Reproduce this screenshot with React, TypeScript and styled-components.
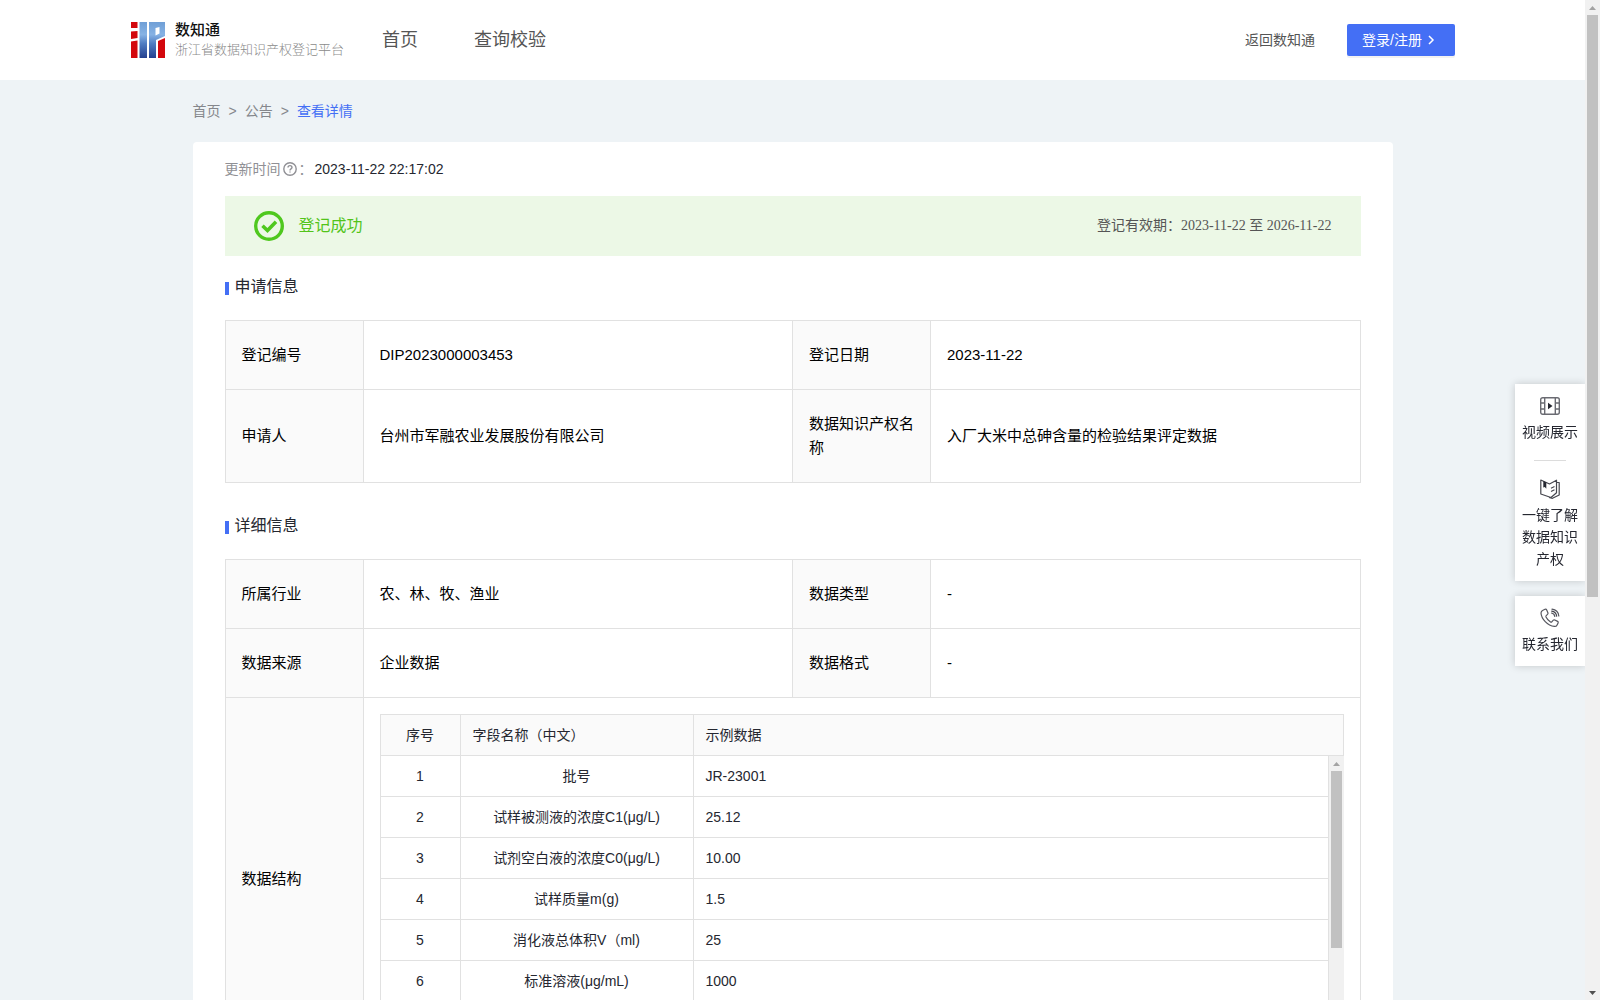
import React from "react";
import styled, { createGlobalStyle } from "styled-components";

const SANS = '"Liberation Sans", Arial, "Noto Sans CJK SC", sans-serif';
const SERIF = '"Liberation Serif", "Times New Roman", "Noto Sans CJK SC", serif';
const BLUE = "#446ff5";
const LINE = "#e1e1e1";

const GlobalStyle = createGlobalStyle`
  *, *::before, *::after { box-sizing: border-box; }
  body { margin: 0; font-family: ${SANS}; font-size: 14px; color: #252730; }
  a { color: inherit; text-decoration: none; }
  table { border-spacing: 0; }
`;

const Shell = styled.div`
  display: flex;
  height: 100vh;
  background: #eef3f6;
`;

const Page = styled.div`
  flex: 1;
  min-width: 0;
  overflow-y: auto;
  scrollbar-width: none;
`;

const Header = styled.header`
  display: flex;
  align-items: center;
  height: 80px;
  padding: 0 130px 0 131px;
  background: #fff;
`;

const Brand = styled.a`
  display: flex;
  align-items: center;
  gap: 10px;
`;

const BrandText = styled.span`
  display: flex;
  flex-direction: column;
`;

const BrandName = styled.strong`
  font-size: 15px;
  line-height: 20px;
  font-weight: 500;
  color: #111;
`;

const BrandSub = styled.span`
  font-size: 13px;
  line-height: 20px;
  font-weight: 300;
  color: #8a8a8a;
`;

const Nav = styled.nav`
  display: flex;
  gap: 56px;
  margin-left: 38px;
  font-size: 18px;
  line-height: 28px;
  color: #555;
`;

const HeaderActions = styled.div`
  display: flex;
  align-items: center;
  gap: 32px;
  margin-left: auto;
  line-height: 20px;
  color: #555;
`;

const LoginButton = styled.button`
  display: flex;
  align-items: center;
  gap: 4px;
  width: 108px;
  height: 32px;
  padding: 0 15px;
  border: 0;
  border-radius: 2px;
  background: ${BLUE};
  box-shadow: 0 2px 0 rgba(0, 0, 0, 0.05);
  color: #fff;
  font: 14px/20px ${SANS};
  white-space: nowrap;
`;

const Content = styled.main`
  width: 1200px;
  max-width: 100%;
  margin: 0 auto;
`;

const Crumbs = styled.nav`
  display: flex;
  gap: 8px;
  padding: 20px 0;
  line-height: 22px;
  color: #85878c;
`;

const CrumbCurrent = styled.span`
  color: ${BLUE};
`;

const Card = styled.section`
  padding: 16px 32px 32px;
  border-radius: 4px;
  background: #fff;
`;

const Updated = styled.div`
  display: flex;
  align-items: center;
  line-height: 22px;
  color: #909095;

  svg { margin: 0 2px; }
  time { margin-left: 2px; color: #252730; }
`;

const Banner = styled.div`
  display: flex;
  align-items: center;
  gap: 15px;
  height: 60px;
  margin-top: 16px;
  padding: 0 29px;
  background: #ecf8e6;
`;

const BannerStatus = styled.strong`
  font-size: 16px;
  line-height: 24px;
  font-weight: 400;
  color: #52c41a;
`;

const BannerPeriod = styled.span`
  margin-left: auto;
  font-family: ${SERIF};
  line-height: 22px;
  color: #555;
`;

const SectionTitle = styled.h2<{ $gap: number }>`
  display: flex;
  align-items: center;
  gap: 6px;
  margin: ${(p) => p.$gap}px 0 20px;
  font-size: 16px;
  line-height: 26px;
  font-weight: 400;

  &::before {
    content: "";
    width: 4px;
    height: 13px;
    margin-top: 2px;
    background: ${BLUE};
  }
`;

const InfoTable = styled.table`
  width: 100%;
  table-layout: fixed;
  border-top: 1px solid ${LINE};
  border-left: 1px solid ${LINE};
  font-size: 15px;
  line-height: 24px;
  color: #000;
`;

const LabelCol = styled.col`
  width: 138px;
`;

const InfoLabel = styled.th`
  padding: 22px 16px;
  border-right: 1px solid ${LINE};
  border-bottom: 1px solid ${LINE};
  background: #fafafa;
  font-weight: 400;
  text-align: left;
`;

const InfoValue = styled.td<{ $nested?: boolean }>`
  padding: ${(p) => (p.$nested ? "16px" : "22px 16px")};
  border-right: 1px solid ${LINE};
  border-bottom: 1px solid ${LINE};
`;

const FieldTable = styled.table`
  flex: 1;
  width: 100%;
  table-layout: fixed;
  border-left: 1px solid ${LINE};
  font-size: 14px;
  line-height: 20px;
  color: #252730;

  thead th { border-top: 1px solid ${LINE}; }
`;

const FieldCol = styled.col<{ $width: number }>`
  width: ${(p) => p.$width}px;
`;

const FieldHead = styled.th<{ $center?: boolean }>`
  padding: 10px 12px;
  border-right: 1px solid ${LINE};
  border-bottom: 1px solid ${LINE};
  background: #fafafa;
  font-weight: 400;
  text-align: ${(p) => (p.$center ? "center" : "left")};
`;

const FieldCell = styled.td<{ $center?: boolean }>`
  padding: 10px 12px;
  border-right: 1px solid ${LINE};
  border-bottom: 1px solid ${LINE};
  text-align: ${(p) => (p.$center ? "center" : "left")};
`;

const FieldBody = styled.div`
  display: flex;
  align-items: flex-start;
  height: 287px;
`;

const Rail = styled.div`
  display: flex;
  flex-direction: column;
  align-items: center;
  flex: none;
  align-self: stretch;
  width: 15px;
  background: #f1f1f1;
`;

const Track = styled.div`
  flex: 1;
  width: 11px;
`;

const Thumb = styled.div<{ $share: number }>`
  height: ${(p) => p.$share}%;
  background: #c1c1c1;
`;

const Floating = styled.aside`
  position: fixed;
  top: 384px;
  right: 15px;
  display: flex;
  flex-direction: column;
  gap: 15px;
  width: 70px;
`;

const FloatGroup = styled.div`
  display: flex;
  flex-direction: column;
  align-items: center;
  background: #fff;
  box-shadow: 0 0 8px rgba(0, 0, 0, 0.18);
  clip-path: inset(-10px 0 -10px -10px);
`;

const FloatLink = styled.a`
  display: flex;
  flex-direction: column;
  align-items: center;
  gap: 5px;
  width: 100%;
  padding: 12px 7px 11px;
  line-height: 22px;
  text-align: center;
`;

const FloatDivider = styled.hr`
  width: 32px;
  height: 1px;
  margin: 6px 0;
  border: 0;
  background: #dcdcdc;
`;

const Logo = () => (
  <svg width="34" height="36" viewBox="0 0 34 36" aria-hidden="true">
    <defs>
      <linearGradient id="ip-blue" x1="0" y1="0" x2="0" y2="36" gradientUnits="userSpaceOnUse">
        <stop offset="0" stopColor="#6f9fd6" />
        <stop offset="0.35" stopColor="#86b2e4" />
        <stop offset="0.6" stopColor="#4f7cc2" />
        <stop offset="1" stopColor="#24408f" />
      </linearGradient>
    </defs>
    <g fill="#d3070d">
      <path d="M0 0h6.500v6H0z" />
      <path d="M0 9.500 6.500 9v7L0 17z" />
      <path d="M0 19.500 6.500 18.500V36H0z" />
      <path d="M27 19 34 16v20h-7z" />
    </g>
    <g fill="url(#ip-blue)">
      <path d="M8.500 0h7.500v36H8.500z" />
      <path fillRule="evenodd" d="M18 0h16v14l-9 4V36h-7zM24.500 6v7.500l4-2V5z" />
    </g>
  </svg>
);

const QuestionIcon = () => (
  <svg width="14" height="14" viewBox="0 0 14 14" fill="none" stroke="#909095" strokeWidth="1.400" aria-hidden="true">
    <circle cx="7" cy="7" r="6.200" />
    <path d="M5 5.600c0-2.600 4-2.600 4 0C9 7 7 6.900 7 8.400M7 9.400v1.200" />
  </svg>
);

const SuccessIcon = () => (
  <svg width="30" height="30" viewBox="0 0 30 30" fill="none" stroke="#4fc81e" aria-hidden="true">
    <circle cx="15" cy="15" r="13.300" strokeWidth="3.400" />
    <path d="m8.500 14.800 5 4.700 8.500-8.700" strokeWidth="3.600" />
  </svg>
);

const ChevronIcon = () => (
  <svg width="10" height="12" viewBox="0 0 10 12" fill="none" stroke="#fff" strokeWidth="1.500" aria-hidden="true">
    <path d="m3 2 4 4-4 4" />
  </svg>
);

const VideoIcon = () => (
  <svg width="20" height="20" viewBox="0 0 20 20" fill="none" stroke="#6a6b72" strokeWidth="1.400" aria-hidden="true">
    <rect x=".7" y="1.700" width="18.600" height="16.600" rx="2" />
    <path d="M4.700 2v16M15.300 2v16M1 7h3.700M1 13h3.700M15.300 7H19M15.300 13H19" />
    <path d="M8 6.800 12.500 10 8 13.200z" fill="#252730" stroke="none" />
  </svg>
);

const BookIcon = () => (
  <svg width="20" height="20" viewBox="0 0 20 20" fill="none" stroke="#45464e" strokeWidth="1.200" strokeLinejoin="round" aria-hidden="true">
    <path d="M.8 1 9.500 5l7-3.800v12.600L11 18.500.8 15z" />
    <path d="M16.500 3.500 19.200 3.500v12.500L12.500 19.300 9 18.500" />
    <path d="m11 9.200 3.500-1.700M11 12.500l3.500-1.700" />
    <path d="m3.300 2 3 1.400v6.400L4.800 8 3.300 8.400z" fill="#252730" stroke="none" />
  </svg>
);

const PhoneIcon = () => (
  <svg width="20" height="20" viewBox="0 0 20 20" fill="none" stroke="#55565e" strokeWidth="1.200" strokeLinecap="round" strokeLinejoin="round" aria-hidden="true">
    <path d="M3 2.200 5 1.300c.8-.3 1.400 0 1.700.7l1.200 2.800c.3.700.1 1.200-.4 1.600L6.200 7.600c-.4.400-.4.800-.2 1.300 1 2 2.600 3.800 4.500 5 .5.300 1 .3 1.300-.1l1.500-1.600c.4-.4.900-.5 1.500-.2l2.800 1.400c.6.300.8.900.5 1.500l-1 2c-.5 1-1.400 1.600-2.700 1.500C7.500 17.800 1.300 10.800 1 5c0-1.300.9-2.300 2-2.800z" />
    <path d="M11.500 5c1.900.3 3 1.500 3.300 3.300M12 1.200c3.600.4 6.400 3.200 6.800 6.800" />
    <path d="M11.700 3.100c2.900.4 4.600 2.200 5 5.100" stroke="#45464e" />
  </svg>
);

const ArrowUp = () => (
  <svg width="15" height="15" viewBox="0 0 15 15" aria-hidden="true">
    <path d="M4 10 7.500 6 11 10z" fill="#a3a3a3" />
  </svg>
);

const ArrowDown = () => (
  <svg width="15" height="15" viewBox="0 0 15 15" aria-hidden="true">
    <path d="M4 6 7.500 10 11 6z" fill="#505050" />
  </svg>
);

type Pair = [string, string];

const application: Pair[][] = [
  [["登记编号", "DIP2023000003453"], ["登记日期", "2023-11-22"]],
  [["申请人", "台州市军融农业发展股份有限公司"], ["数据知识产权名称", "入厂大米中总砷含量的检验结果评定数据"]],
];

const details: Pair[][] = [
  [["所属行业", "农、林、牧、渔业"], ["数据类型", "-"]],
  [["数据来源", "企业数据"], ["数据格式", "-"]],
];

const fields: Pair[] = [
  ["批号", "JR-23001"],
  ["试样被测液的浓度C1(μg/L)", "25.12"],
  ["试剂空白液的浓度C0(μg/L)", "10.00"],
  ["试样质量m(g)", "1.5"],
  ["消化液总体积V（ml)", "25"],
  ["标准溶液(μg/mL)", "1000"],
];

const InfoCols = () => (
  <colgroup>
    <LabelCol />
    <col />
    <LabelCol />
    <col />
  </colgroup>
);

const InfoRows = ({ rows }: { rows: Pair[][] }) => (
  <>
    {rows.map((row) => (
      <tr key={row[0][0]}>
        {row.map(([label, value]) => (
          <React.Fragment key={label}>
            <InfoLabel scope="row">{label}</InfoLabel>
            <InfoValue>{value}</InfoValue>
          </React.Fragment>
        ))}
      </tr>
    ))}
  </>
);

const FieldCols = () => (
  <colgroup>
    <FieldCol $width={80} />
    <FieldCol $width={233} />
    <col />
  </colgroup>
);

const ScrollRail = ({ share }: { share: number }) => (
  <Rail>
    <ArrowUp />
    <Track>
      <Thumb $share={share} />
    </Track>
    <ArrowDown />
  </Rail>
);

const FieldList = () => (
  <>
    <FieldTable>
      <FieldCols />
      <thead>
        <tr>
          <FieldHead $center>序号</FieldHead>
          <FieldHead>字段名称（中文）</FieldHead>
          <FieldHead>示例数据</FieldHead>
        </tr>
      </thead>
    </FieldTable>
    <FieldBody>
      <FieldTable>
        <FieldCols />
        <tbody>
          {fields.map(([name, sample], i) => (
            <tr key={name}>
              <FieldCell $center>{i + 1}</FieldCell>
              <FieldCell $center>{name}</FieldCell>
              <FieldCell>{sample}</FieldCell>
            </tr>
          ))}
        </tbody>
      </FieldTable>
      <ScrollRail share={69} />
    </FieldBody>
  </>
);

export default function App() {
  return (
    <Shell>
      <GlobalStyle />
      <Page>
        <Header>
          <Brand href="#">
            <Logo />
            <BrandText>
              <BrandName>数知通</BrandName>
              <BrandSub>浙江省数据知识产权登记平台</BrandSub>
            </BrandText>
          </Brand>
          <Nav>
            <a href="#">首页</a>
            <a href="#">查询校验</a>
          </Nav>
          <HeaderActions>
            <a href="#">返回数知通</a>
            <LoginButton type="button">
              登录/注册
              <ChevronIcon />
            </LoginButton>
          </HeaderActions>
        </Header>
        <Content>
          <Crumbs>
            <a href="#">首页</a>
            <span>&gt;</span>
            <a href="#">公告</a>
            <span>&gt;</span>
            <CrumbCurrent>查看详情</CrumbCurrent>
          </Crumbs>
          <Card>
            <Updated>
              更新时间
              <QuestionIcon />
              ：<time>2023-11-22 22:17:02</time>
            </Updated>
            <Banner>
              <SuccessIcon />
              <BannerStatus>登记成功</BannerStatus>
              <BannerPeriod>登记有效期：2023-11-22 至 2026-11-22</BannerPeriod>
            </Banner>
            <SectionTitle $gap={18}>申请信息</SectionTitle>
            <InfoTable>
              <InfoCols />
              <tbody>
                <InfoRows rows={application} />
              </tbody>
            </InfoTable>
            <SectionTitle $gap={30}>详细信息</SectionTitle>
            <InfoTable>
              <InfoCols />
              <tbody>
                <InfoRows rows={details} />
                <tr>
                  <InfoLabel scope="row">数据结构</InfoLabel>
                  <InfoValue $nested colSpan={3}>
                    <FieldList />
                  </InfoValue>
                </tr>
              </tbody>
            </InfoTable>
          </Card>
        </Content>
      </Page>
      <ScrollRail share={60} />
      <Floating>
        <FloatGroup>
          <FloatLink href="#">
            <VideoIcon />
            视频展示
          </FloatLink>
          <FloatDivider />
          <FloatLink href="#">
            <BookIcon />
            一键了解数据知识产权
          </FloatLink>
        </FloatGroup>
        <FloatGroup>
          <FloatLink href="#">
            <PhoneIcon />
            联系我们
          </FloatLink>
        </FloatGroup>
      </Floating>
    </Shell>
  );
}
